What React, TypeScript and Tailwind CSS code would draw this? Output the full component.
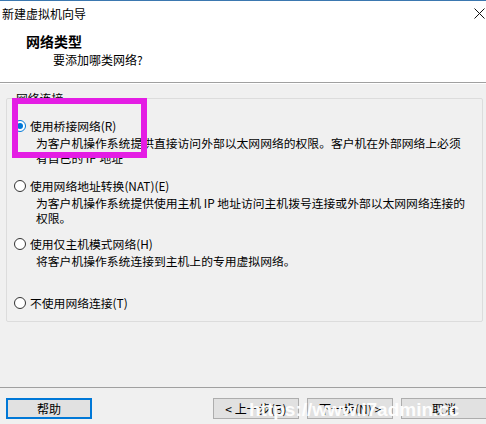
import React from "react";

interface OptionProps {
  label: string;
  checked?: boolean;
  lines?: string[];
  className?: string;
}

const Radio = ({ checked }: { checked?: boolean }) => (
  <span
    className={`flex h-[12px] w-[12px] shrink-0 items-center justify-center rounded-full border bg-white ${
      checked ? "border-[#0078d7]" : "border-[#333333]"
    }`}
  >
    {checked && <span className="h-[6px] w-[6px] rounded-full bg-[#0078d7]" />}
  </span>
);

const Option = (props: OptionProps) => (
  <div className={props.className}>
    <div className="flex h-[15px] items-center gap-[4px]">
      <Radio checked={props.checked} />
      <span>{props.label}</span>
    </div>
    {props.lines && (
      <div className="mt-[2px] pl-[22px]">
        {props.lines.map((l) => (
          <p key={l} className="whitespace-nowrap">
            {l}
          </p>
        ))}
      </div>
    )}
  </div>
);

const Button = ({ text, focused }: { text: string; focused?: boolean }) => (
  <button
    className={`flex h-[21px] w-[86px] shrink-0 items-center justify-center bg-[#e1e1e1] text-[12px] text-black ${
      focused ? "border-2 border-[#0078d7]" : "border border-[#adadad]"
    }`}
  >
    {text}
  </button>
);

const App = () => {
  return (
    <div className="relative flex h-[424px] w-[486px] flex-col overflow-hidden bg-[#f0f0f0] font-['Noto_Sans_CJK_SC',sans-serif] text-black">
      {/* title bar */}
      <div className="flex h-[26px] items-center justify-between border-t border-[#3b78b0] bg-white pl-[2px] pr-[1px]">
        <span className="text-[12px] leading-none">新建虚拟机向导</span>
        <svg width="11" height="11" viewBox="0 0 11 11">
          <path d="M0.5 0.5 L10.5 10.5 M10.5 0.5 L0.5 10.5" stroke="#111" strokeWidth="1" />
        </svg>
      </div>

      {/* header */}
      <div className="h-[57px] border-b border-[#a0a0a0] bg-white pt-[6px]">
        <p className="pl-[26px] text-[14px] font-bold leading-[18px]">网络类型</p>
        <p className="mt-[1px] pl-[53px] text-[12px] leading-[18px]">要添加哪类网络?</p>
      </div>

      {/* body */}
      <div className="flex-1 border-t border-white pt-[6px]">
        <fieldset className="mx-[6px] w-[477px] rounded-[2px] border border-[#dcdcdc] px-[7px] pb-[11px] text-[11.8px] leading-[15px]">
          <legend className="ml-[1px] px-[1px] text-[11.8px] leading-[16px]">网络连接</legend>
          <Option
            className="mt-[12px]"
            checked
            label="使用桥接网络(R)"
            lines={[
              "为客户机操作系统提供直接访问外部以太网网络的权限。客户机在外部网络上必须",
              "有自己的 IP 地址",
            ]}
          />
          <Option
            className="mt-[13px]"
            label="使用网络地址转换(NAT)(E)"
            lines={[
              "为客户机操作系统提供使用主机 IP 地址访问主机拨号连接或外部以太网网络连接的",
              "权限。",
            ]}
          />
          <Option
            className="mt-[11px]"
            label="使用仅主机模式网络(H)"
            lines={["将客户机操作系统连接到主机上的专用虚拟网络。"]}
          />
          <Option className="mt-[27px]" label="不使用网络连接(T)" />
        </fieldset>
      </div>

      {/* footer */}
      <div className="h-[37px] border-t border-[#a0a0a0] pt-[10px]">
        <div className="flex items-center pl-[6px]">
          <Button text="帮助" focused />
          <div className="ml-auto mr-[-1px] flex gap-[8px]">
            <Button text="< 上一步(B)" />
            <Button text="下一步(N) >" />
            <Button text="取消" />
          </div>
        </div>
      </div>

      {/* annotation + watermark overlays */}
      <div className="pointer-events-none absolute left-[12px] top-[98px] h-[60px] w-[135px] border-[6px] border-[#e41de4]" />
      <div className="pointer-events-none absolute left-[249px] top-[399px] font-['Liberation_Sans',sans-serif] text-[19px] font-bold leading-[22px] text-white opacity-95">
        https://www.i7admin.cc
      </div>
    </div>
  );
};

export default App;
